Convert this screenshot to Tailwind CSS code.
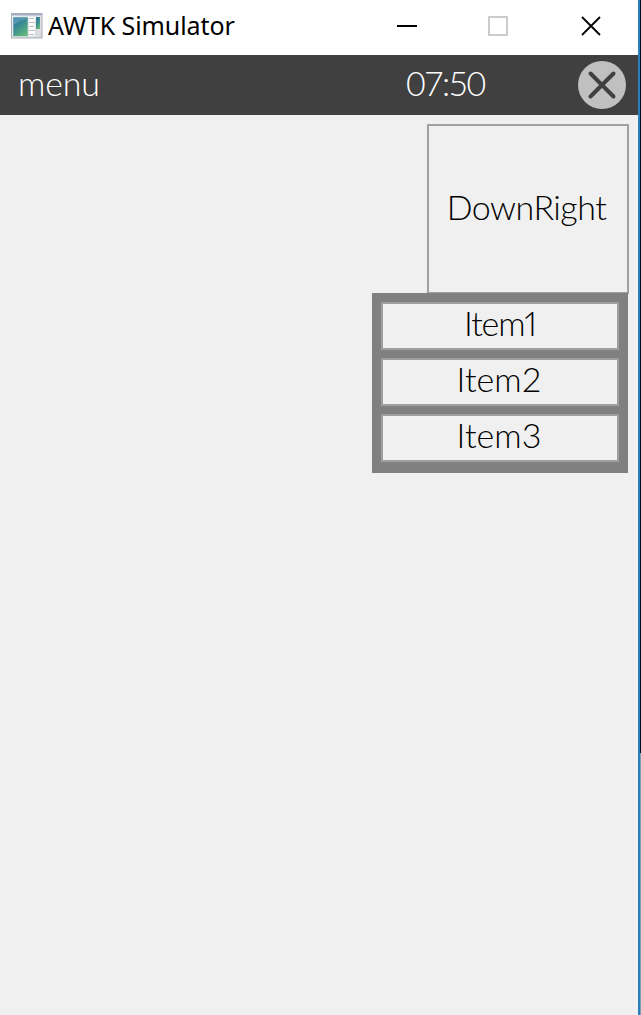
<!DOCTYPE html>
<html lang="en">
<head>
<meta charset="utf-8">
<title>AWTK Simulator</title>
<script src="https://cdn.jsdelivr.net/npm/@tailwindcss/browser@4"></script>
</head>
<body class="flex h-[1015px] w-[641px] overflow-hidden bg-[#f0f0f0]">
<div class="flex w-[638px] flex-col">
  <header class="flex h-[55px] items-center bg-white pl-[11px]">
    <svg class="-mt-1 shrink-0" width="32" height="26" viewBox="0 0 32 26">
      <defs>
        <linearGradient id="g" x1="0" y1="0" x2=".6" y2="1"><stop offset="0" stop-color="#3978a5"/><stop offset=".5" stop-color="#398b94"/><stop offset="1" stop-color="#60b57d"/></linearGradient>
        <linearGradient id="f" x1="0" y1="0" x2="1" y2="1"><stop offset="0" stop-color="#f5f6f7"/><stop offset="1" stop-color="#d5d7da"/></linearGradient>
      </defs>
      <rect x=".5" y=".5" width="30.5" height="24.5" fill="url(#f)" stroke="#a9adb5"/>
      <path d="M1 1.5H31" stroke="#a5aec0" stroke-width="2"/>
      <rect x="2" y="4" width="15" height="19.5" fill="url(#g)" stroke="#d7e3e8" stroke-width=".6"/>
      <path d="M2.5 12Q10 6 16.500 6V4.500H2.500Z" fill="#8abcd0" opacity=".35"/>
      <rect x="18" y="4" width="6" height="19" fill="#fafafa"/>
      <path d="M18 5.500h5M18 9.500h6M18 13.500h5M18 17.500h6M18 21.500h5" stroke="#bec1c5"/>
      <rect x="25" y="4" width="4" height="12" fill="url(#g)"/>
    </svg>
    <h1 class="-mt-[5px] ml-[5px] w-[350px] whitespace-nowrap font-['Noto_Sans'] text-[25px] leading-[52px] tracking-[-0.1px] text-black">AWTK Simulator</h1>
    <svg class="-mt-2 -ml-[1px]" width="204" height="24" viewBox="0 0 204 24">
      <path d="M0 14H20" stroke="#000" stroke-width="2"/>
      <path d="M92 5h18v18h-18z" fill="none" stroke="#ccc" stroke-width="2"/>
      <path d="M185 5L203 23M203 5L185 23" stroke="#000" stroke-width="1.8"/>
    </svg>
  </header>
  <div class="flex h-[60px] items-center bg-[#404040] pl-[18px] font-['Lato'] text-[34px] font-light text-white">
    <div class="-mt-[5px] w-[388px] leading-[60px] tracking-[-0.2px]">menu</div>
    <div class="-mt-[5px] w-[172px] leading-[60px] tracking-[-1.7px]">07:50</div>
    <svg width="48" height="48" viewBox="0 0 48 48"><circle cx="24" cy="24" r="24" fill="#c0c0c0"/><path d="M12.500 12.500L35.500 35.500M35.500 12.500L12.500 35.500" stroke="#404040" stroke-width="4" stroke-linecap="round"/></svg>
  </div>
  <main class="flex flex-col items-end pt-[9px] font-['Lato'] text-[34px] font-light text-black">
    <button class="mr-[9px] flex h-[170px] w-[202px] items-center justify-center border-2 border-[#a0a0a0] pr-[3px] pb-[5px] tracking-[-0.5px]">DownRight</button>
    <div class="-mt-px mr-[10px] flex h-[180px] w-[256px] flex-col gap-2 bg-[#808080] px-[9px] pt-[9px]">
      <div class="h-12 border-2 border-[#a0a0a0] bg-[#f0f0f0] text-center leading-[37px] tracking-[-1.2px] proportional-nums">Item1</div>
      <div class="h-12 border-2 border-[#a0a0a0] bg-[#f0f0f0] pr-[2px] text-center leading-[37px]">Item2</div>
      <div class="h-12 border-2 border-[#a0a0a0] bg-[#f0f0f0] pr-[2px] text-center leading-[37px]">Item3</div>
    </div>
  </main>
</div>
<div class="w-[2px] bg-[#2a7ebc]"></div>
<div class="flex w-px flex-col"><div class="h-[753px] bg-[#000b20]"></div><div class="grow bg-[#829eb2]"></div></div>
</body>
</html>
